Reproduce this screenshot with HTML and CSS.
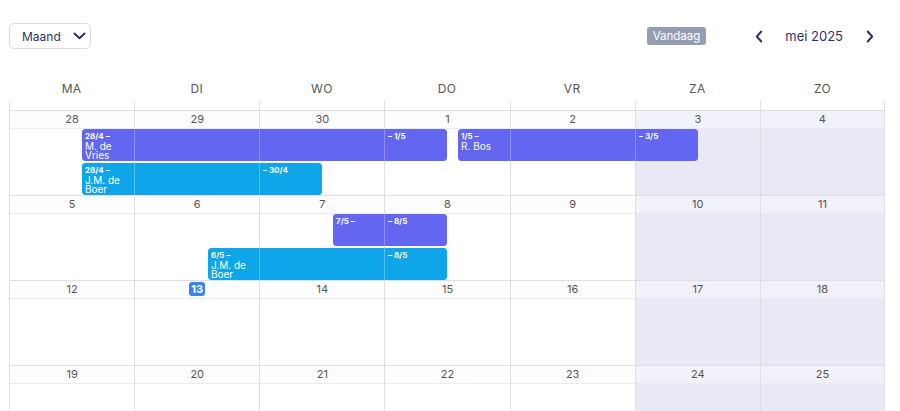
FILE: index.html
```html
<!DOCTYPE html>
<html lang="nl">
<head>
<meta charset="utf-8">
<title>Kalender</title>
<link rel="stylesheet" href="styles.css">
</head>
<body>
<div class="toolbar">
  <button class="view-select">Maand
    <svg class="chev-down" width="13" height="8" viewBox="0 0 13 8"><path d="M1.5 1.5 L6.5 6.2 L11.5 1.5" fill="none" stroke="#34306a" stroke-width="2" stroke-linecap="round" stroke-linejoin="round"/></svg>
  </button>
  <div class="nav">
    <span class="today-btn">Vandaag</span>
    <svg class="arrow prev" width="8" height="13" viewBox="0 0 8 13"><path d="M6.3 1.5 L1.8 6.5 L6.3 11.5" fill="none" stroke="#34306a" stroke-width="2" stroke-linecap="round" stroke-linejoin="round"/></svg>
    <span class="month-label">mei 2025</span>
    <svg class="arrow next" width="8" height="13" viewBox="0 0 8 13"><path d="M1.7 1.5 L6.2 6.5 L1.7 11.5" fill="none" stroke="#34306a" stroke-width="2" stroke-linecap="round" stroke-linejoin="round"/></svg>
  </div>
</div>

<div class="calendar">
  <div class="dow">
    <div>MA</div><div>DI</div><div>WO</div><div>DO</div><div>VR</div><div>ZA</div><div>ZO</div>
  </div>
  <div class="dow-lines">
    <div></div><div></div><div></div><div></div><div></div><div></div><div></div>
  </div>

  <!-- week 1 -->
  <div class="week">
    <div class="days">
      <div class="day"><div class="num">28</div></div>
      <div class="day"><div class="num">29</div></div>
      <div class="day"><div class="num">30</div></div>
      <div class="day"><div class="num">1</div></div>
      <div class="day"><div class="num">2</div></div>
      <div class="day weekend"><div class="num">3</div></div>
      <div class="day weekend"><div class="num">4</div></div>
    </div>
    <div class="event purple row0" style="left:73px">
      <div class="seg" style="width:52px"><b>28/4 –</b><span>M. de Vries</span></div>
      <div class="seg" style="width:124px"></div>
      <div class="seg" style="width:124px"></div>
      <div class="seg" style="width:62px"><b>– 1/5</b></div>
    </div>
    <div class="event purple row0" style="left:449px">
      <div class="seg" style="width:52px"><b>1/5 –</b><span>R. Bos</span></div>
      <div class="seg" style="width:124px"></div>
      <div class="seg" style="width:62px"><b>– 3/5</b></div>
    </div>
    <div class="event blue row1" style="left:73px">
      <div class="seg" style="width:52px"><b>28/4 –</b><span>J.M. de Boer</span></div>
      <div class="seg" style="width:124px"></div>
      <div class="seg" style="width:62px"><b>– 30/4</b></div>
    </div>
  </div>

  <!-- week 2 -->
  <div class="week">
    <div class="days">
      <div class="day"><div class="num">5</div></div>
      <div class="day"><div class="num">6</div></div>
      <div class="day"><div class="num">7</div></div>
      <div class="day"><div class="num">8</div></div>
      <div class="day"><div class="num">9</div></div>
      <div class="day weekend"><div class="num">10</div></div>
      <div class="day weekend"><div class="num">11</div></div>
    </div>
    <div class="event purple row0" style="left:324px">
      <div class="seg" style="width:51px"><b>7/5 –</b></div>
      <div class="seg" style="width:62px"><b>– 8/5</b></div>
    </div>
    <div class="event blue row1" style="left:199px">
      <div class="seg" style="width:51px"><b>6/5 –</b><span>J.M. de Boer</span></div>
      <div class="seg" style="width:124px"></div>
      <div class="seg" style="width:62px"><b>– 8/5</b></div>
    </div>
  </div>

  <!-- week 3 -->
  <div class="week">
    <div class="days">
      <div class="day"><div class="num">12</div></div>
      <div class="day"><div class="num"><span class="today">13</span></div></div>
      <div class="day"><div class="num">14</div></div>
      <div class="day"><div class="num">15</div></div>
      <div class="day"><div class="num">16</div></div>
      <div class="day weekend"><div class="num">17</div></div>
      <div class="day weekend"><div class="num">18</div></div>
    </div>
  </div>

  <!-- week 4 -->
  <div class="week last">
    <div class="days">
      <div class="day"><div class="num">19</div></div>
      <div class="day"><div class="num">20</div></div>
      <div class="day"><div class="num">21</div></div>
      <div class="day"><div class="num">22</div></div>
      <div class="day"><div class="num">23</div></div>
      <div class="day weekend"><div class="num">24</div></div>
      <div class="day weekend"><div class="num">25</div></div>
    </div>
  </div>
</div>
</body>
</html>
```

FILE: styles.css
```css
* { box-sizing: border-box; }
html, body { margin: 0; padding: 0; background: #fff; }
body {
  font-family: Inter, "Noto Sans", "Liberation Sans", sans-serif;
  color: #555;
  width: 900px;
  height: 411px;
  overflow: hidden;
}

.toolbar {
  display: flex;
  justify-content: space-between;
  align-items: center;
  padding: 23px 26px 0 9px;
  height: 49px;
}
.view-select {
  display: flex;
  align-items: center;
  gap: 12px;
  height: 26px;
  width: 82px;
  padding: 0 0 0 12px;
  border: 1px solid #dcdce2;
  border-radius: 5px;
  background: #fff;
  font-family: inherit;
  font-size: 12px;
  font-weight: 400;
  color: #34306a;
}
.nav {
  display: flex;
  align-items: center;
}
.today-btn {
  background: #939eb2;
  color: #fff;
  font-size: 11.5px;
  font-weight: 400;
  line-height: 18px;
  height: 18px;
  padding: 0 6px;
  border-radius: 3px;
  margin-right: 49px;
}
.arrow { display: block; }
.month-label {
  font-size: 13px;
  font-weight: 400;
  color: #34306a;
  margin: 0 23px 0 22px;
}

.calendar {
  margin: 27px 15px 0 9px;
  width: 876px;
  height: 335px;
  overflow: hidden;
}
.dow, .dow-lines, .days {
  display: grid;
  grid-template-columns: repeat(7, 1fr);
}
.dow div {
  height: 25px;
  line-height: 25px;
  text-align: center;
  font-size: 12px;
  color: #555;
  letter-spacing: 0.3px;
}
.dow-lines div {
  height: 9px;
  border-left: 1px solid #dedee3;
}
.dow-lines div:last-child { border-right: 1px solid #dedee3; }

.week {
  position: relative;
  border-top: 1px solid #dedee3;
  height: 85px;
}
.week.last { height: 46px; }
.days { height: 100%; }
.day {
  border-left: 1px solid #dedee3;
  background: #fff;
}
.day:last-child { border-right: 1px solid #dedee3; }
.day.weekend { background: #e9e8f5; }
.num {
  height: 18px;
  border-bottom: 1px solid #ececf0;
  background: #fdfdfe;
  text-align: center;
  font-size: 11px;
  line-height: 17px;
  color: #555;
}
.weekend .num { background: #f0f1f9; }
.today {
  display: inline-block;
  background: #3b82f6;
  color: #fff;
  font-weight: 700;
  border-radius: 3px;
  padding: 0 2px;
  line-height: 14px;
  margin-top: 1px;
}

.event {
  position: absolute;
  display: flex;
  gap: 1px;
  height: 32px;
  border-radius: 4px;
  overflow: hidden;
}
.event.row0 { top: 18px; }
.event.row1 { top: 52px; }
.event.purple { background: #8c8ef5; }
.event.blue { background: #55c0ef; }
.event.purple .seg { background: #6366f1; }
.event.blue .seg { background: #0ea5e9; }
.seg {
  flex: none;
  height: 100%;
  padding: 2px 3px 0 3px;
  color: #fff;
  overflow: hidden;
}
.seg b {
  display: block;
  font-size: 8px;
  font-weight: 700;
  line-height: 10px;
}
.seg span {
  display: block;
  font-size: 10px;
  line-height: 9px;
  margin-top: 1px;
}
```
